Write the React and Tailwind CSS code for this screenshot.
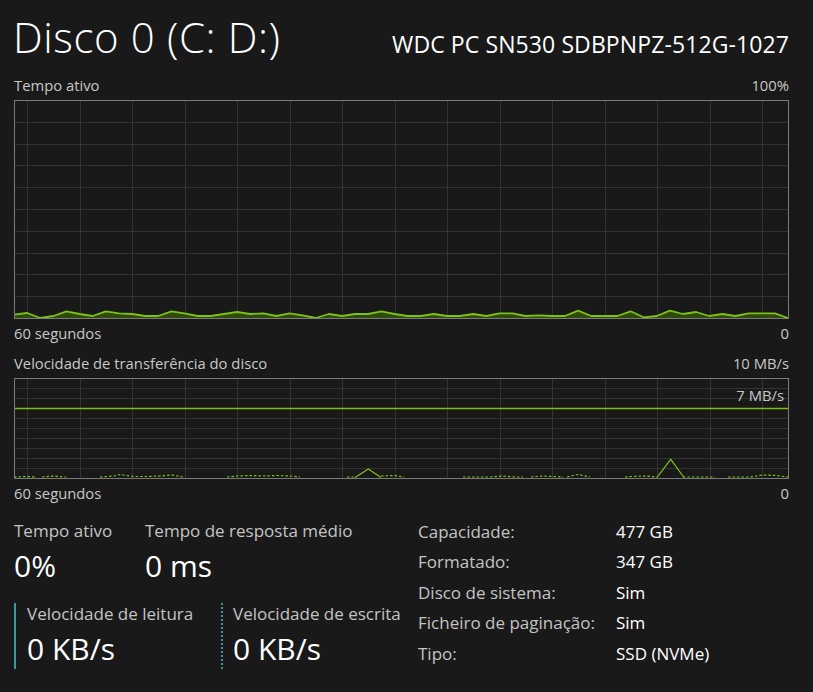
import React from 'react';

const W = 775;
const VX = Array.from({ length: 15 }, (_, k) => Math.round(13.3 + k * 52.5) + 0.5);

// tempo ativo, altura em px acima da base (60 amostras)
const ACTIVE = [
  3.3, 5, 0, 2, 6.7, 4, 2, 6.7, 4.7, 4, 2, 2, 6.7, 4.7, 2, 2, 4, 6, 4, 4.7,
  2, 4.7, 2.7, 0, 4, 2, 4, 4, 6.7, 4, 2, 2, 4, 2, 2, 4, 2, 4.7, 4.7, 2,
  2.7, 2, 2, 7.3, 2, 2, 2, 6.7, 0.7, 2, 7.3, 4, 6, 2, 4, 2, 4.7, 4.7, 4.7, 0,
];

const WRITE = [
  [[0, 477], [13, 476.5], [21, 477]],
  [[28, 477], [39, 476], [52, 477]],
  [[86, 477], [100, 476], [106, 474.5], [119, 476.5], [132, 476.5], [146, 476], [158, 475], [169, 477]],
  [[213, 477], [223, 476], [237, 475.5], [250, 476], [263, 475.5], [276, 476], [286, 477]],
  [[333, 477], [341, 477]],
  [[367, 476], [380, 475.5], [390, 477]],
  [[449, 477], [462, 477], [476, 477], [489, 476], [502, 477], [509, 477]],
  [[517, 477], [526, 476], [539, 476.5], [549, 477]],
  [[553, 477], [564, 474.5], [576, 477]],
  [[611, 477], [618, 476.5], [631, 476], [643, 477]],
  [[669, 477], [683, 477], [701, 477]],
  [[714, 477], [736, 477], [749, 475], [762, 475.5], [774, 477]],
];

const READ = [
  [[341, 477.5], [354.3, 469], [367, 477.5]],
  [[643, 477.5], [656.7, 459.3], [670, 477.5]],
];

function Grid({ h, rows }) {
  const step = (h - 1) / rows;
  return (
    <g>
      {Array.from({ length: rows - 1 }, (_, k) => {
        const y = Math.round((k + 1) * step) + 0.5;
        return <line key={'h' + k} x1="0" x2={W} y1={y} y2={y} stroke="#333333" strokeWidth="1" />;
      })}
      {VX.map((x) => (
        <line key={'v' + x} x1={x} x2={x} y1="0" y2={h} stroke="#333333" strokeWidth="1" />
      ))}
    </g>
  );
}

function ActiveChart() {
  const h = 219;
  const base = 218;
  const pts = ACTIVE.map((v, i) => [i * (774 / 59), base - v]);
  const line = pts.map((p) => p.join(',')).join(' ');
  const area = `0,${base} ${line} 774,${base}`;
  return (
    <svg width={W} height={h} className="block">
      <Grid h={h} rows={10} />
      <polygon points={area} fill="#2f4a0c" />
      <polyline points={line} fill="none" stroke="#7dc01a" strokeWidth="1.8" strokeLinejoin="round" />
      <rect x="0.5" y="0.5" width={W - 1} height={h - 1} fill="none" stroke="#7a7a7a" />
    </svg>
  );
}

function TransferChart() {
  const h = 101;
  const off = 378;
  return (
    <svg width={W} height={h} className="block">
      <Grid h={h} rows={10} />
      <line x1="1" x2={W - 1} y1="30.5" y2="30.5" stroke="#7dc01a" strokeWidth="1.5" />
      {WRITE.map((seg, i) => (
        <polyline
          key={'w' + i}
          points={seg.map(([x, y]) => `${x},${y - off}`).join(' ')}
          fill="none"
          stroke="#7dc01a"
          strokeWidth="1.2"
          strokeDasharray="2.5 2"
        />
      ))}
      {READ.map((seg, i) => (
        <polyline
          key={'r' + i}
          points={seg.map(([x, y]) => `${x},${y - off}`).join(' ')}
          fill="none"
          stroke="#7dc01a"
          strokeWidth="1.2"
        />
      ))}
      <rect x="0.5" y="0.5" width={W - 1} height={h - 1} fill="none" stroke="#7a7a7a" />
    </svg>
  );
}

function SmallRow({ left, right, className = '' }) {
  return (
    <div className={'flex justify-between text-[14.8px] leading-[20px] text-[#c8c8c8] ' + className}>
      <span>{left}</span>
      <span>{right}</span>
    </div>
  );
}

function Stat({ label, value }) {
  return (
    <div>
      <div className="text-[17px] leading-[24px] text-[#c4c4c4]">{label}</div>
      <div className="mt-[5px] text-[30px] leading-[36px] text-white">{value}</div>
    </div>
  );
}

const specs = [
  ['Capacidade:', '477 GB'],
  ['Formatado:', '347 GB'],
  ['Disco de sistema:', 'Sim'],
  ['Ficheiro de paginação:', 'Sim'],
  ['Tipo:', 'SSD (NVMe)'],
];

export default function App() {
  return (
    <div className="w-[813px] h-[692px] overflow-hidden bg-[#191919] pl-[14px] pr-[24px] pt-[16px] font-['Open_Sans',sans-serif]">
      <div className="flex h-[59px] items-baseline justify-between">
        <h1 className="-ml-[1px] text-[42px] leading-[42px] font-light tracking-[0.6px] text-white">Disco 0 (C: D:)</h1>
        <div className="text-[23px] tracking-[0.1px] text-white">WDC PC SN530 SDBPNPZ-512G-1027</div>
      </div>

      <SmallRow left="Tempo ativo" right="100%" className="h-[25px]" />
      <ActiveChart />
      <SmallRow left="60 segundos" right="0" className="h-[24px] pt-[4px]" />

      <SmallRow left="Velocidade de transferência do disco" right="10 MB/s" className="mt-[10px] h-[25px]" />
      <div className="relative">
        <TransferChart />
        <span className="absolute right-[5px] top-[7px] text-[14.8px] leading-[20px] text-[#c8c8c8]">7 MB/s</span>
      </div>
      <SmallRow left="60 segundos" right="0" className="h-[24px] pt-[4px]" />

      <div className="mt-[14px] flex">
        <div className="w-[404px]">
          <div className="flex pt-[2px]">
            <div className="w-[131px]">
              <Stat label="Tempo ativo" value="0%" />
            </div>
            <Stat label="Tempo de resposta médio" value="0 ms" />
          </div>
          <div className="mt-[19px] flex h-[66px]">
            <div className="w-[207px] border-l-2 border-[#3a9a9a] pl-[11px]">
              <div className="text-[17px] leading-[22px] text-[#c4c4c4]">Velocidade de leitura</div>
              <div className="mt-[7px] text-[30px] leading-[34px] text-white">0 KB/s</div>
            </div>
            <div className="border-l-2 border-dotted border-[#3a9a9a] pl-[10px]">
              <div className="text-[17px] leading-[22px] text-[#c4c4c4]">Velocidade de escrita</div>
              <div className="mt-[7px] text-[30px] leading-[34px] text-white">0 KB/s</div>
            </div>
          </div>
        </div>
        <div className="grid grid-cols-[198px_1fr] text-[17px] leading-[30px]">
          {specs.map(([k, v]) => (
            <React.Fragment key={k}>
              <span className="text-[#c4c4c4]">{k}</span>
              <span className="text-white">{v}</span>
            </React.Fragment>
          ))}
        </div>
      </div>
    </div>
  );
}
